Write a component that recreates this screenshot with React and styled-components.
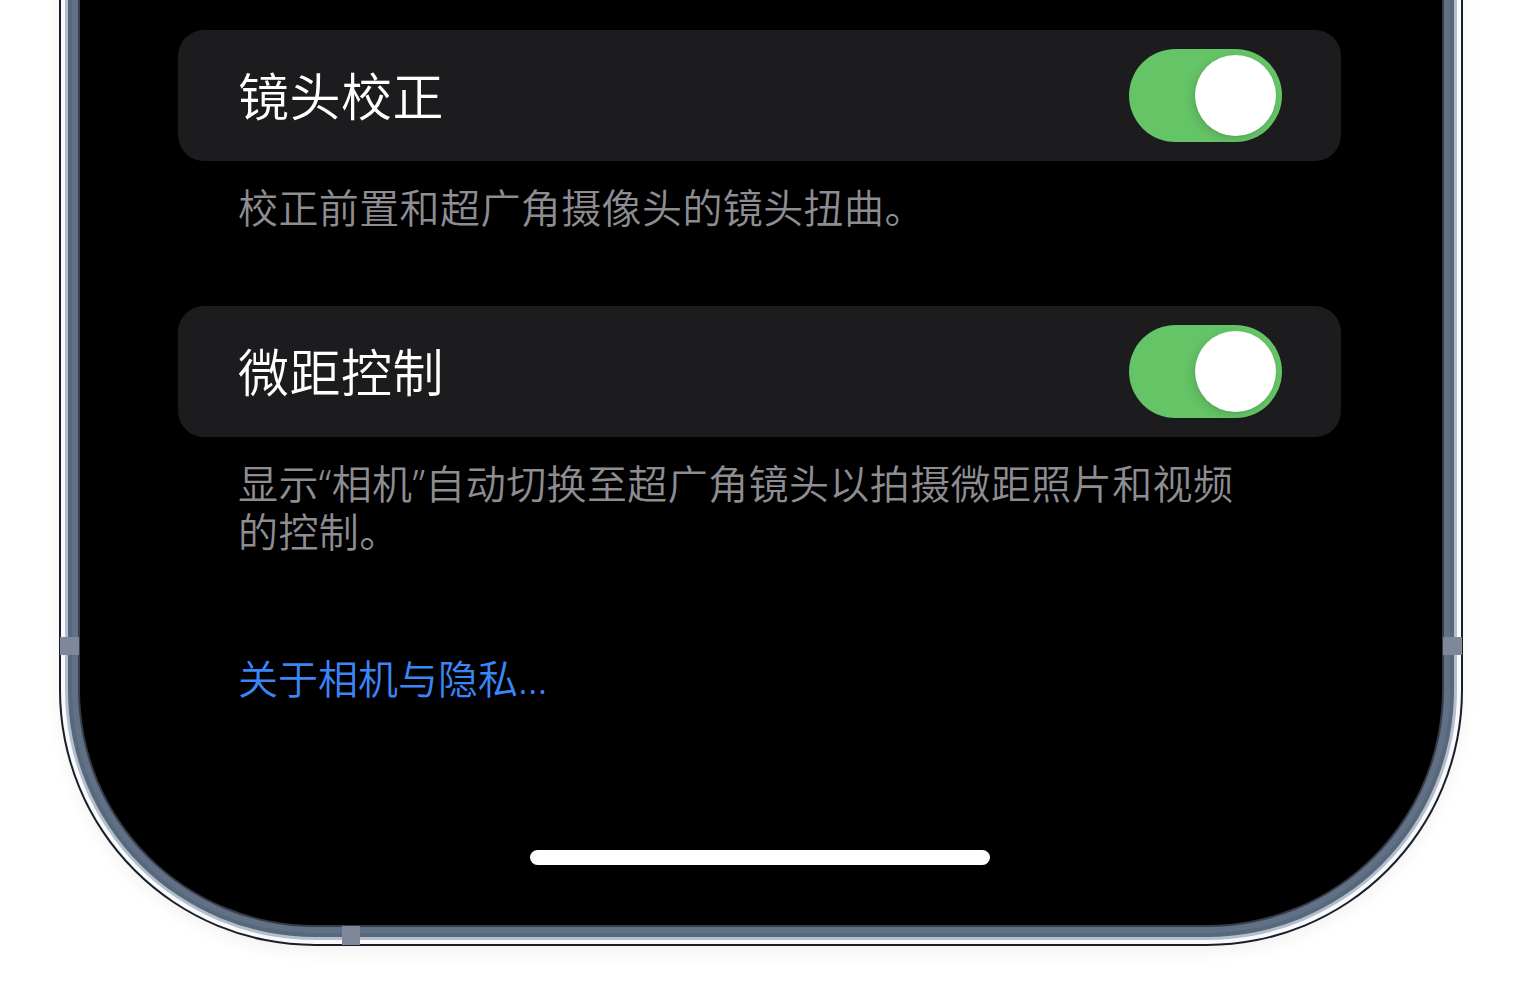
import styled, { createGlobalStyle } from 'styled-components';

const GlobalStyle = createGlobalStyle`
  html, body {
    margin: 0;
    padding: 0;
    background: #ffffff;
  }
  body {
    font-family: "Noto Sans", "Noto Sans CJK SC", sans-serif;
    font-weight: 350;
    -webkit-font-smoothing: antialiased;
  }
`;

const Page = styled.div`
  width: 1520px;
  height: 1000px;
  overflow: hidden;
  position: relative;
`;

/* screen glass; the steel frame is built from stacked rings around it */
const Screen = styled.div`
  position: relative;
  box-sizing: border-box;
  margin-left: 80px;
  width: 1362px;
  height: 925px;
  background: #000;
  border-radius: 0 0 235px 235px;
  padding: 30px 101px 60px 98px;
  display: flex;
  flex-direction: column;
  box-shadow:
    0 0 0 2px #353d49,
    0 0 0 8px #617085,
    0 0 0 12px #58687c,
    0 0 0 15px #b4bfcc,
    0 0 0 19px #f7f9fc,
    0 0 0 21px #1a1e25,
    0 6px 18px 20px rgba(0, 0, 0, 0.06);
`;

const AntennaBand = styled.span`
  position: absolute;
  background: #7f879a;
  ${({ $side }) =>
    $side === 'left'
      ? 'left: -20px; top: 637px; width: 19px; height: 18px;'
      : $side === 'right'
      ? 'right: -20px; top: 637px; width: 19px; height: 18px;'
      : 'left: 262px; bottom: -20px; width: 18px; height: 19px;'}
`;

const Card = styled.div`
  box-sizing: border-box;
  height: 131px;
  background: #1c1c1e;
  border-radius: 26px;
  padding: 0 59px 0 62px;
  display: flex;
  align-items: center;
  justify-content: space-between;
`;

const CardTitle = styled.span`
  color: #ffffff;
  font-size: 51px;
  line-height: 60px;
  letter-spacing: 0.5px;
  margin-left: -2px;
`;

const Switch = styled.div`
  position: relative;
  width: 153px;
  height: 93px;
  border-radius: 47px;
  background: ${({ $on }) => ($on ? '#65c466' : '#39393d')};
`;

const Knob = styled.span`
  position: absolute;
  top: 6px;
  ${({ $on }) => ($on ? 'right: 6px;' : 'left: 6px;')}
  width: 81px;
  height: 81px;
  border-radius: 50%;
  background: #ffffff;
  box-shadow: -3px 3px 10px rgba(0, 0, 0, 0.12), 0 1px 2px rgba(0, 0, 0, 0.08);
`;

const Footer = styled.p`
  margin: 23px 0 0;
  padding-left: 60px;
  max-width: 1022px;
  color: #8d8d92;
  font-size: 40px;
  line-height: 48px;
  letter-spacing: 0.4px;
`;

const Group = styled.section`
  & + & {
    margin-top: 74px;
  }
`;

const Link = styled.a`
  display: block;
  margin-top: 99px;
  padding-left: 60px;
  color: #3b86f7;
  font-size: 40px;
  line-height: 48px;
  text-decoration: none;
`;

const HomeIndicator = styled.div`
  margin: auto auto 0;
  width: 460px;
  height: 15px;
  border-radius: 8px;
  background: #ffffff;
`;

const settings = [
  { title: '镜头校正', note: '校正前置和超广角摄像头的镜头扭曲。', on: true },
  {
    title: '微距控制',
    note: '显示“相机”自动切换至超广角镜头以拍摄微距照片和视频的控制。',
    on: true,
  },
];

const ToggleRow = ({ title, on }) => (
  <Card>
    <CardTitle>{title}</CardTitle>
    <Switch $on={on}>
      <Knob $on={on} />
    </Switch>
  </Card>
);

const App = () => (
  <>
    <GlobalStyle />
    <Page>
      <Screen>
        {settings.map(s => (
          <Group key={s.title}>
            <ToggleRow title={s.title} on={s.on} />
            <Footer>{s.note}</Footer>
          </Group>
        ))}
        <Link href="#">关于相机与隐私...</Link>
        <HomeIndicator />
        <AntennaBand $side="left" />
        <AntennaBand $side="right" />
        <AntennaBand $side="bottom" />
      </Screen>
    </Page>
  </>
);

export default App;
